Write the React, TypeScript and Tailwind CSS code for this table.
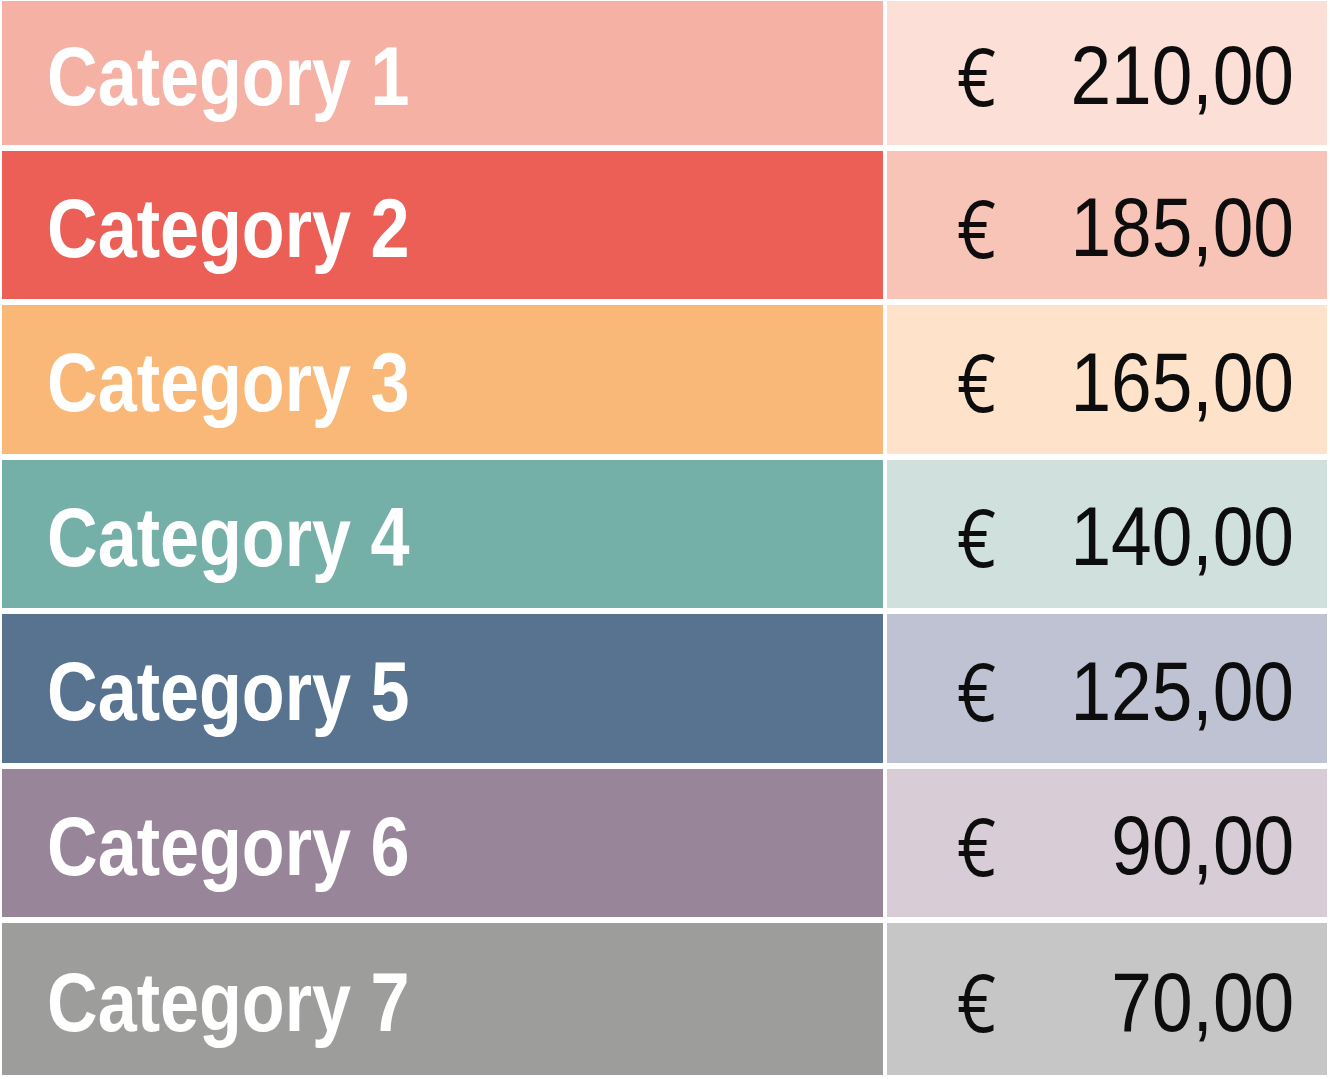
const rows = [
  { label: "Category 1", amount: "210,00", left: "bg-[#f5b1a4]", right: "bg-[#fce0d7]", h: "h-[143.5px]" },
  { label: "Category 2", amount: "185,00", left: "bg-[#ec5f56]", right: "bg-[#f9c4b8]", h: "h-[148.5px]" },
  { label: "Category 3", amount: "165,00", left: "bg-[#f9b878]", right: "bg-[#fee3ca]", h: "h-[148.5px]" },
  { label: "Category 4", amount: "140,00", left: "bg-[#74afa8]", right: "bg-[#d0e0dd]", h: "h-[148.5px]" },
  { label: "Category 5", amount: "125,00", left: "bg-[#58738f]", right: "bg-[#bfc2d2]", h: "h-[148.5px]" },
  { label: "Category 6", amount: "90,00", left: "bg-[#988599]", right: "bg-[#d8ccd6]", h: "h-[148.5px]" },
  { label: "Category 7", amount: "70,00", left: "bg-[#9d9d9c]", right: "bg-[#c6c6c6]", h: "h-[152px]" },
];

// no condensed Helvetica here, so squeeze Arial-metric text horizontally
const font = "font-['Liberation_Sans','Arial',sans-serif]";

export default function App() {
  return (
    <div className="h-[1079px] w-[1330px] overflow-hidden bg-white pt-px pl-[2px]">
      <div className="flex flex-col gap-[6px]">
        {rows.map((r) => (
          <div key={r.label} className={`flex gap-[4px] ${r.h}`}>
            <div className={`flex w-[881px] items-center pl-[45px] ${r.left}`}>
              <span
                className={`${font} inline-block origin-left scale-x-[0.835] whitespace-nowrap pt-[6px] text-[84px] font-bold leading-none text-white`}
              >
                {r.label}
              </span>
            </div>
            <div className={`flex w-[440px] items-center justify-between pl-[70px] pr-[33px] ${r.right}`}>
              <span
                className={`font-['Open_Sans',sans-serif] inline-block origin-left scale-x-[0.85] pt-[4px] text-[80px] leading-none text-[#0d0d0d]`}
              >
                €
              </span>
              <span
                className={`${font} inline-block origin-right scale-x-[0.87] whitespace-nowrap pt-[5px] text-[84px] leading-none text-[#0d0d0d]`}
              >
                {r.amount}
              </span>
            </div>
          </div>
        ))}
      </div>
    </div>
  );
}
